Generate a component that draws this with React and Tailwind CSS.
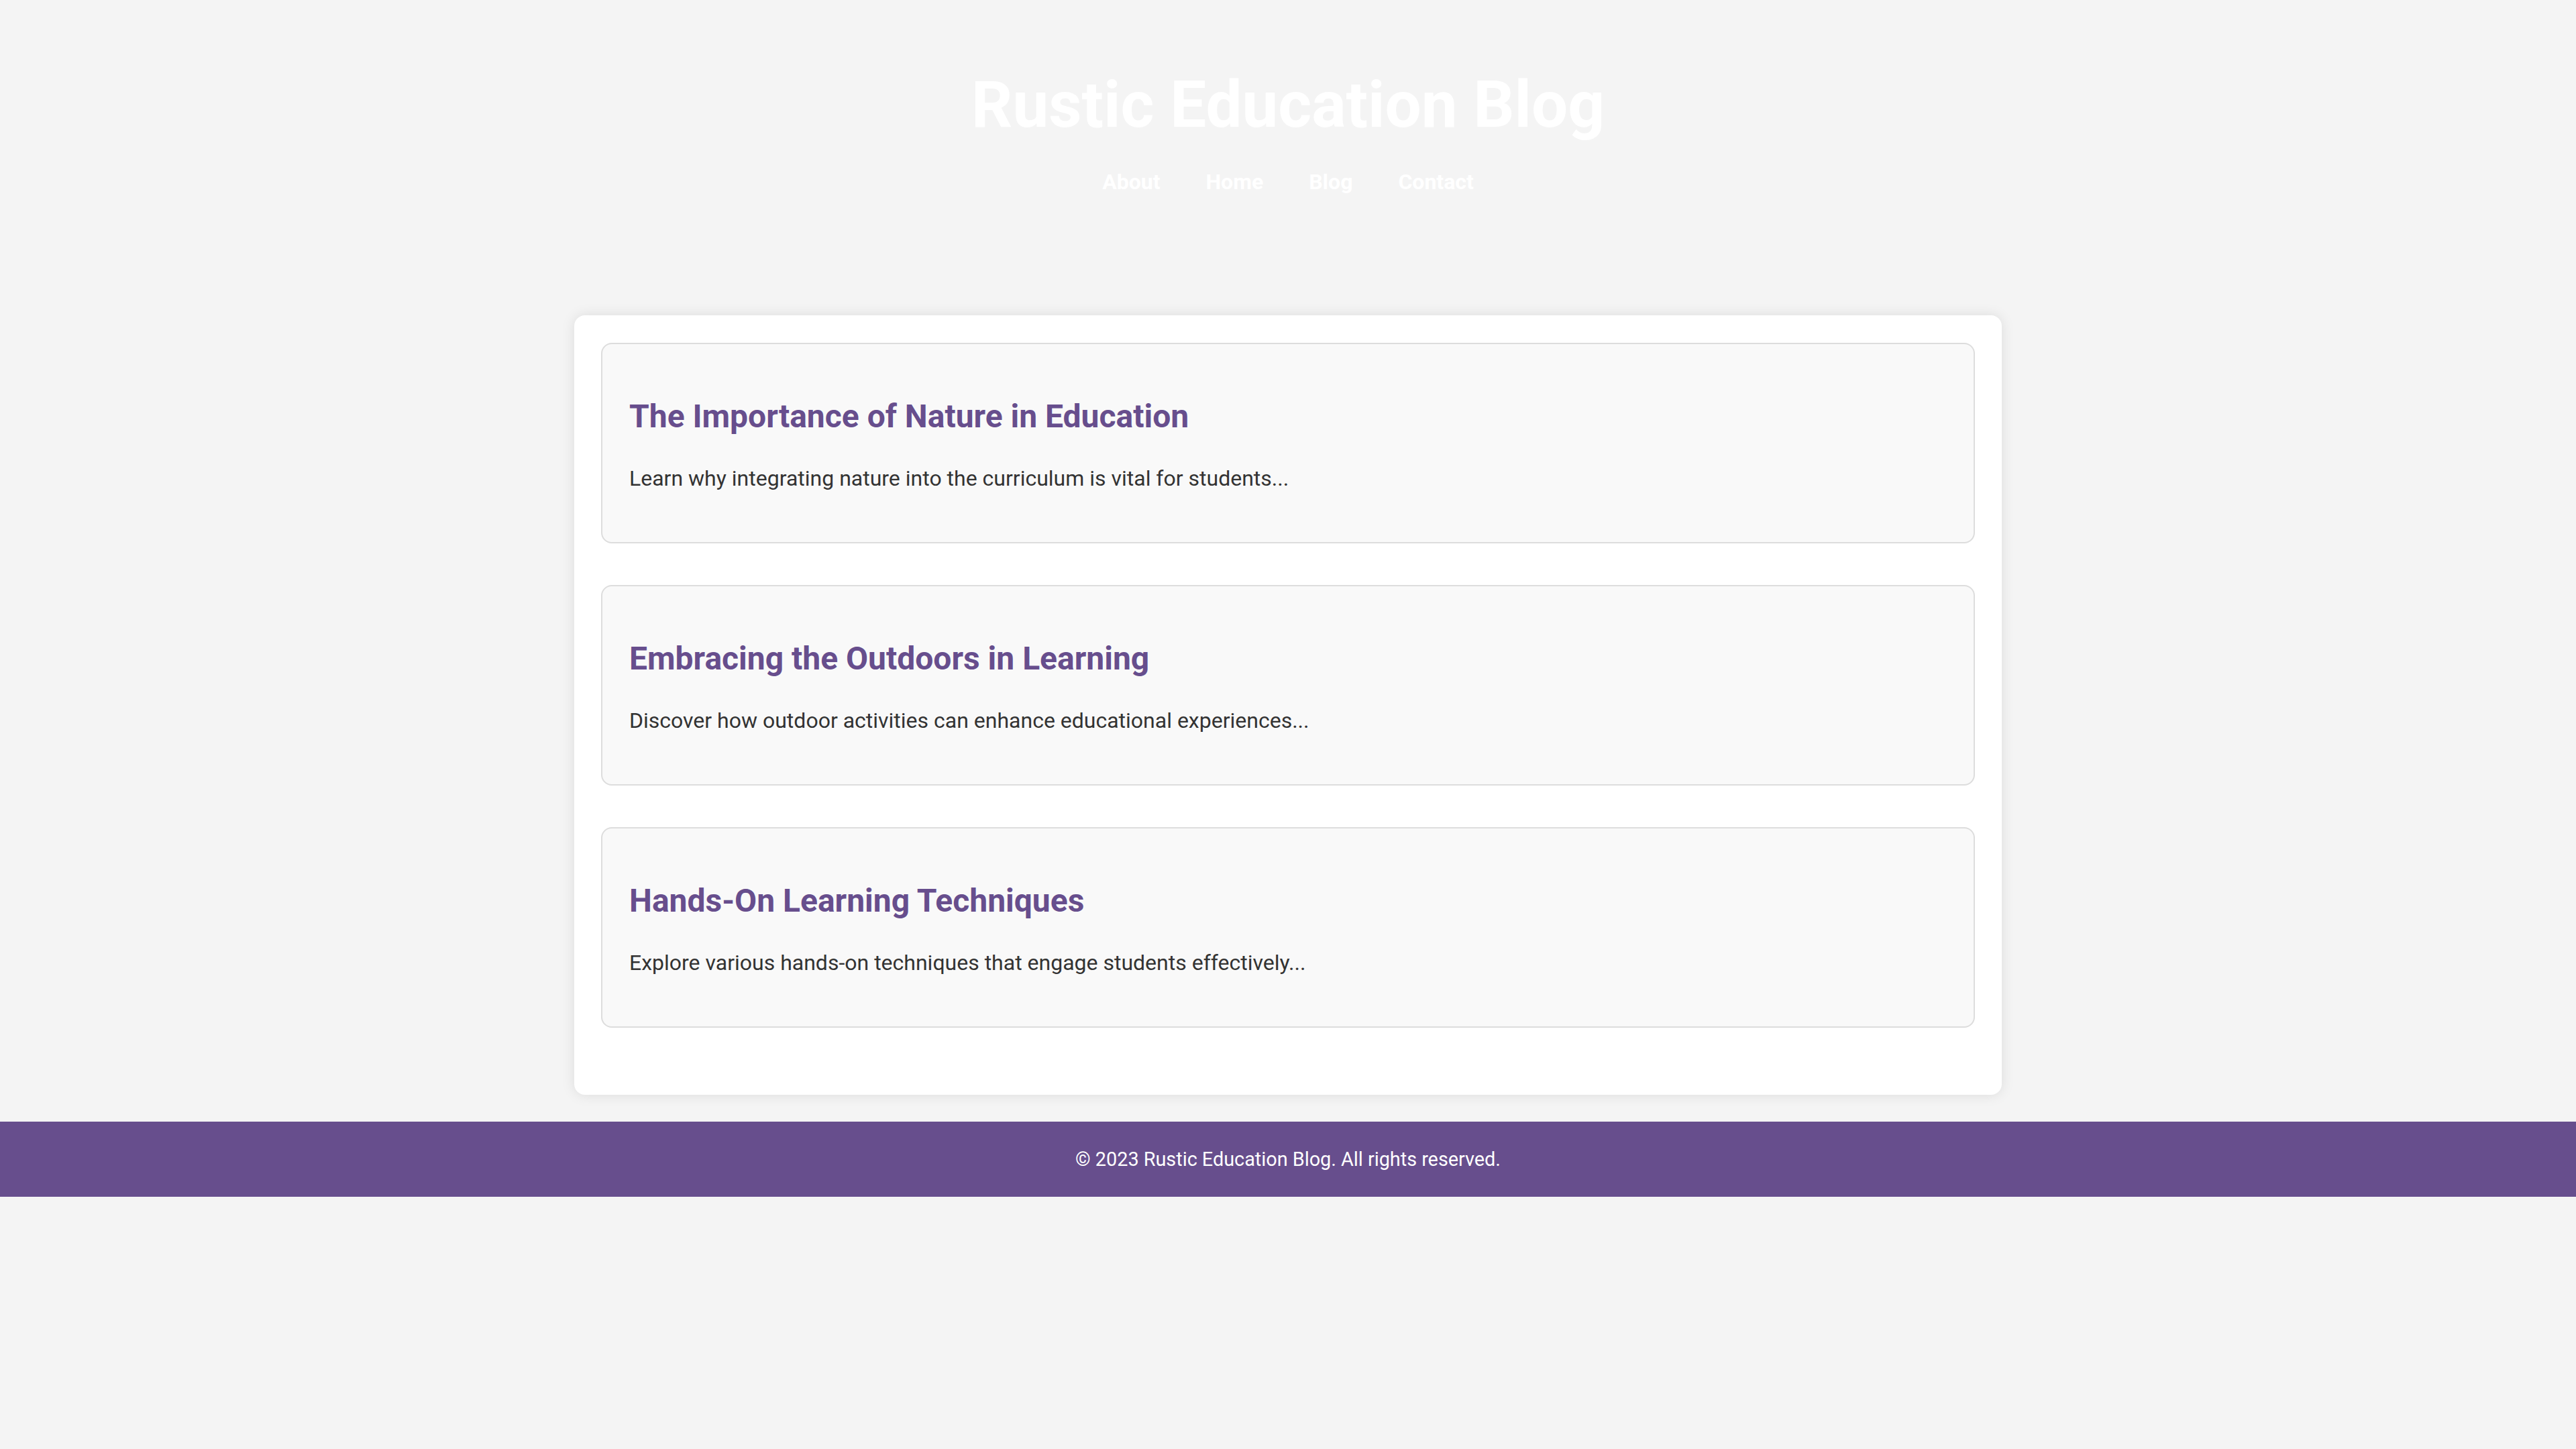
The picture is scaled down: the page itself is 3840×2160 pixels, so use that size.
import React from "react";

const posts = [
  {
    title: "The Importance of Nature in Education",
    excerpt: "Learn why integrating nature into the curriculum is vital for students...",
  },
  {
    title: "Embracing the Outdoors in Learning",
    excerpt: "Discover how outdoor activities can enhance educational experiences...",
  },
  {
    title: "Hands-On Learning Techniques",
    excerpt: "Explore various hands-on techniques that engage students effectively...",
  },
];

const links = ["About", "Home", "Blog", "Contact"];

export default function App() {
  return (
    <div className="min-h-screen bg-[#f4f4f4] font-['Roboto',sans-serif]">
      {/* header */}
      <header className="pt-[100px] text-center">
        <h1 className="text-[96px] font-bold leading-[112px] text-white">Rustic Education Blog</h1>
        <nav className="mt-[40px] flex justify-center gap-[68px] text-[32px] font-bold leading-[38px] text-white">
          {links.map((l) => (
            <a key={l} href="#">{l}</a>
          ))}
        </nav>
      </header>

      {/* posts */}
      <main className="mx-auto mt-[180px] flex w-[2128px] flex-col gap-[62px] rounded-[16px] bg-white px-10 pt-[41px] pb-[100px] shadow-[0_0_20px_rgba(0,0,0,0.1)]">
        {posts.map((post) => (
          <article
            key={post.title}
            className="rounded-[16px] border-2 border-[#dddddd] bg-[#f9f9f9] px-10 pt-[78px] pb-[76px]"
          >
            <h2 className="text-[48px] font-bold leading-[60px] text-[#674e8d]">{post.title}</h2>
            <p className="mt-[43px] text-[32px] leading-[38px] text-[#333333]">{post.excerpt}</p>
          </article>
        ))}
      </main>

      <footer className="mt-10 bg-[#674e8d] py-8 text-center text-[28.8px] leading-[48px] text-white">
        © 2023 Rustic Education Blog. All rights reserved.
      </footer>
    </div>
  );
}
